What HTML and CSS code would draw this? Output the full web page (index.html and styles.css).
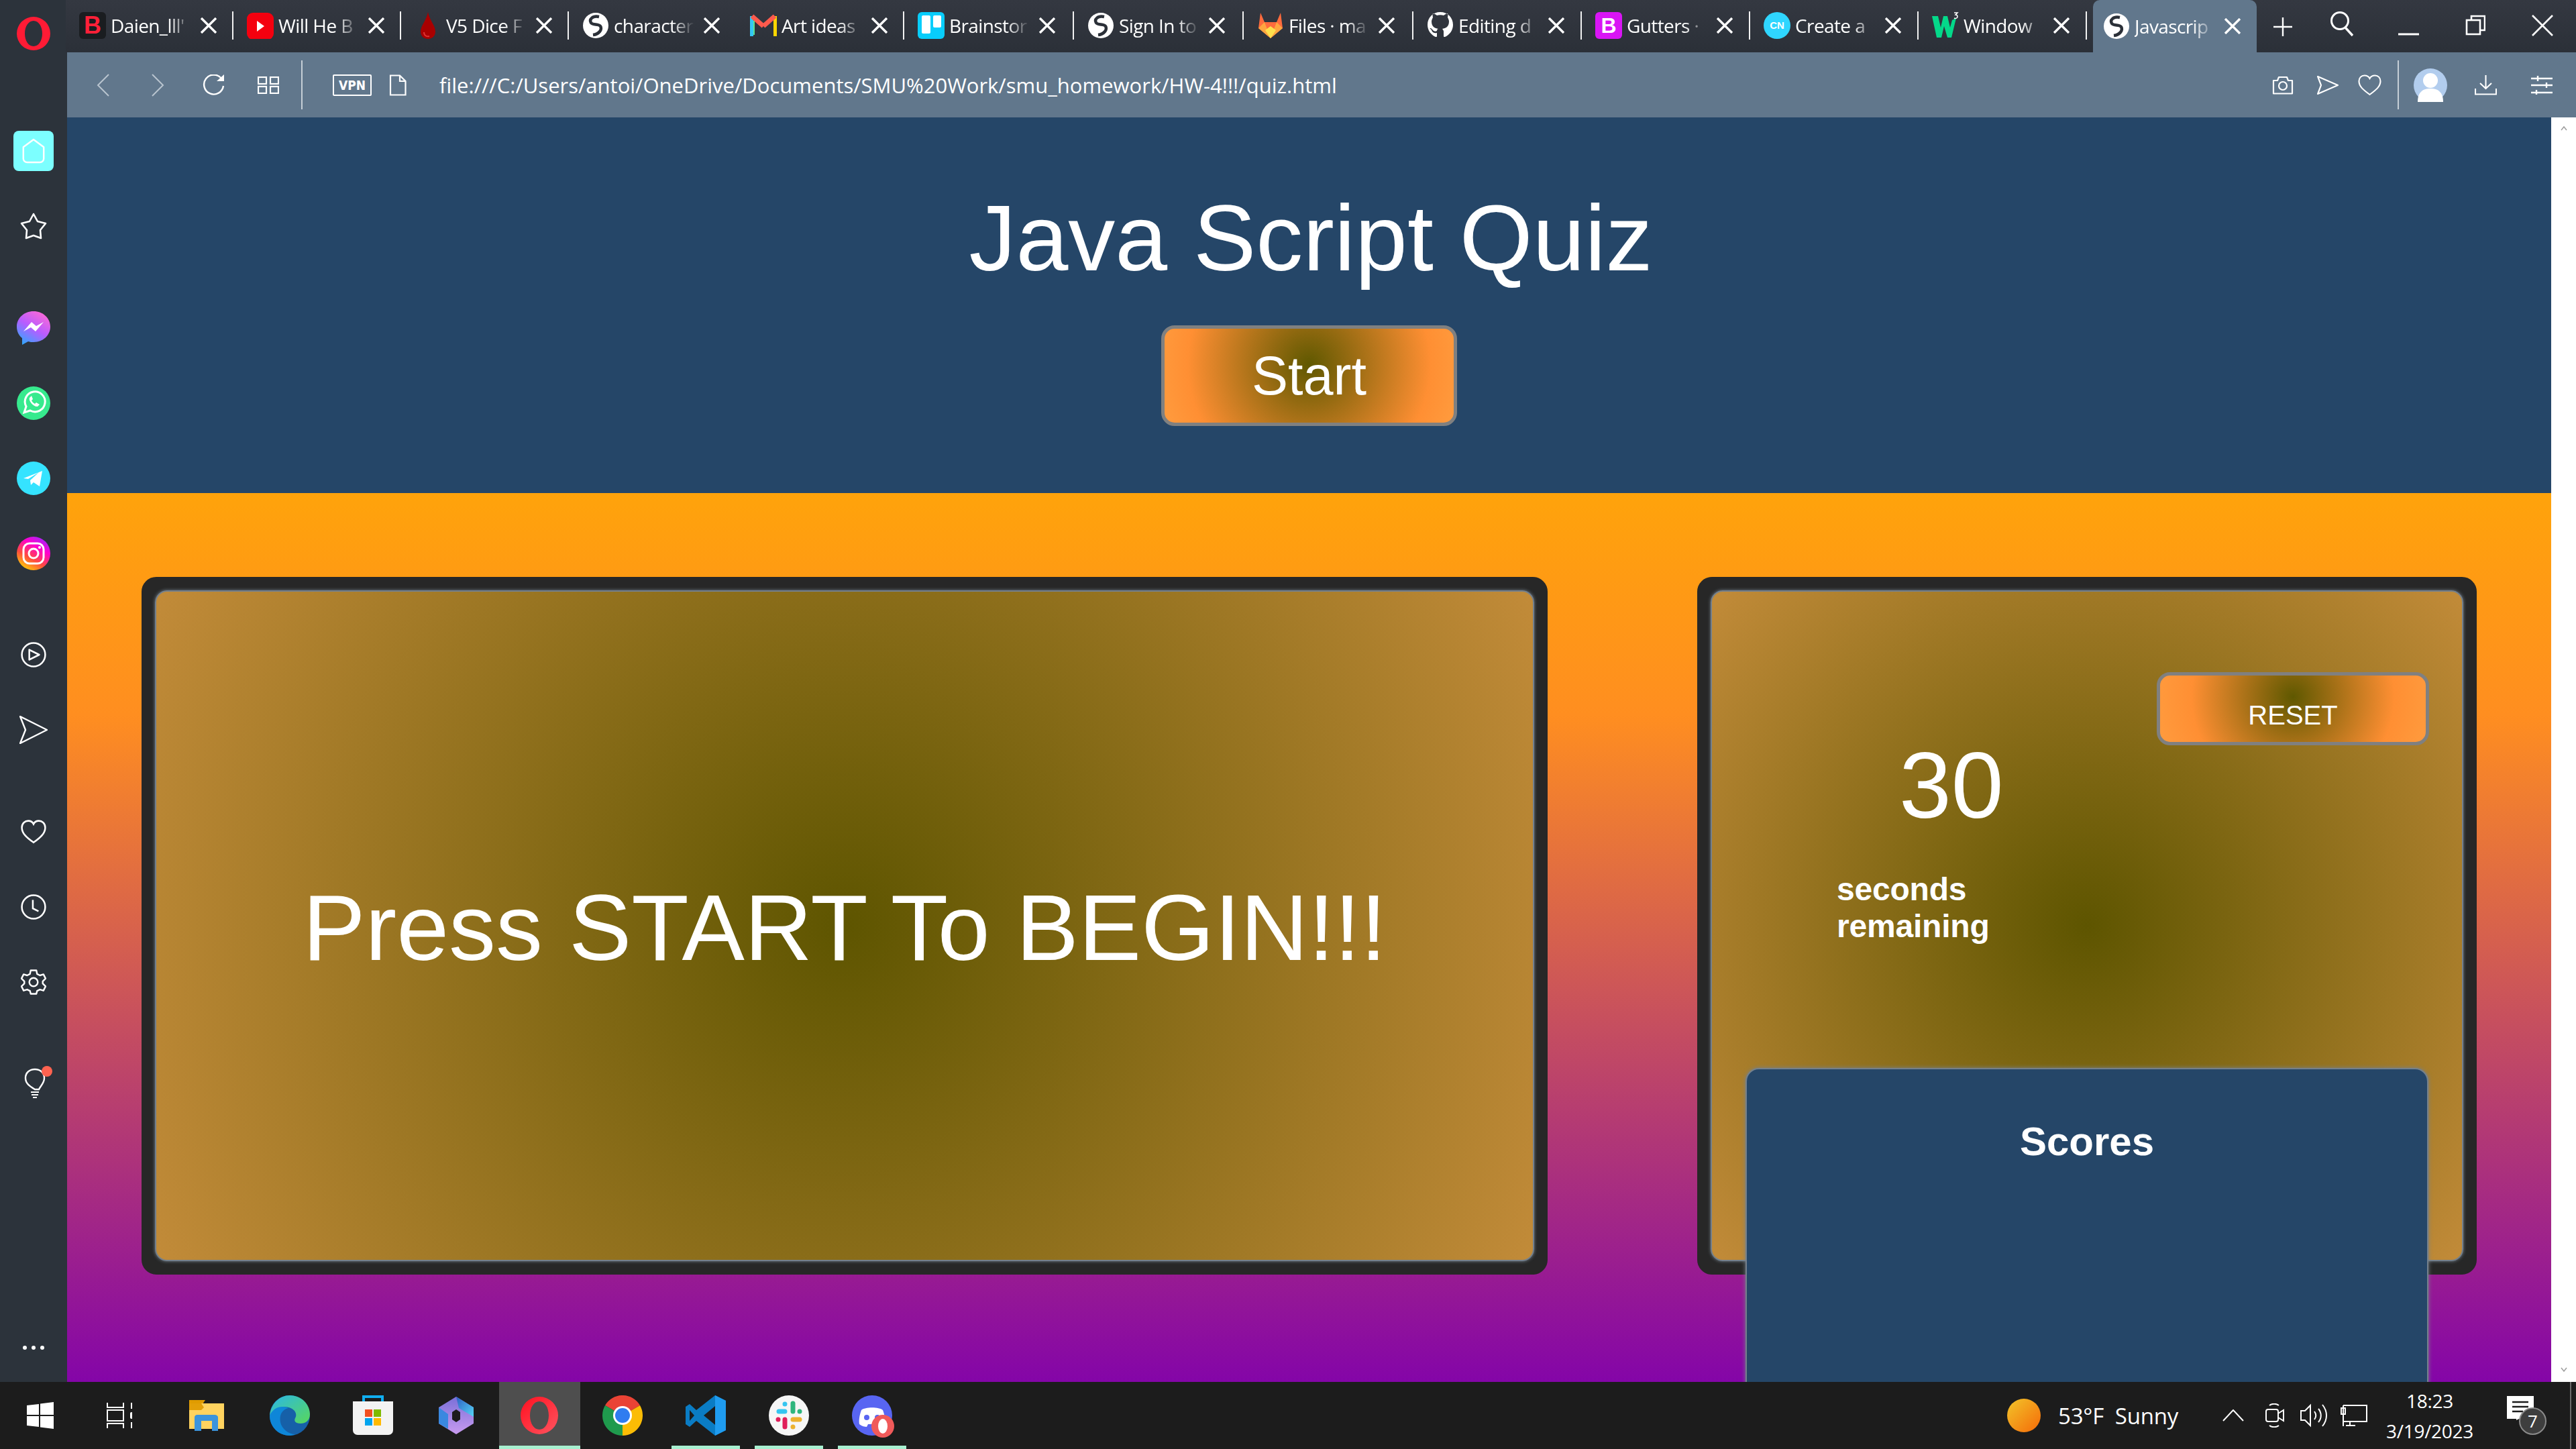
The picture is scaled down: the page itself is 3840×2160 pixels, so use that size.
FILE: index.html
```html
<!DOCTYPE html>
<html lang="en">
<head>
<meta charset="utf-8">
<title>Javascript Quiz</title>
<link rel="stylesheet" href="styles.css">
</head>
<body>
<svg class="sprite" aria-hidden="true">
  <symbol id="x" viewBox="0 0 26 24"><path d="M2 1 L24 23 M24 1 L2 23" fill="none" stroke="#fff" stroke-width="3.4"/></symbol>
  <symbol id="globe" viewBox="0 0 40 40"><circle cx="20" cy="20" r="19" fill="#fff"/><path d="M25 7 C15 5 10 11 13 16 C16 20 24 17 27 21 C30 26 25 33 16 34" fill="none" stroke="#2b3038" stroke-width="4.5"/></symbol>
</svg>
<div class="screen">
  <div class="browser">
    <header class="tabbar">
      <div class="logo-col">
        <svg class="opera" viewBox="0 0 50 50"><path fill-rule="evenodd" fill="#ff1b35" d="M25 0a25 25 0 1 0 0 50a25 25 0 1 0 0-50zM25 6c8 0 13 9 13 19s-5 19-13 19s-13-9-13-19s5-19 13-19z"/></svg>
      </div>
      <div class="tab sep"><span class="fav fav-band">B</span><span class="tab-text">Daien_lll'</span><svg class="tab-x"><use href="#x"/></svg></div>
      <div class="tab sep"><svg class="fav" viewBox="0 0 40 40"><rect width="40" height="40" y="1" rx="9" fill="#f4000f"/><path d="M15 13l11 8l-11 8z" fill="#fff"/></svg><span class="tab-text">Will He B</span><svg class="tab-x"><use href="#x"/></svg></div>
      <div class="tab sep"><svg class="fav" viewBox="0 0 40 40"><path d="M20 0 C22 12 31 20 31 29 C31 36 26 40 20 40 C14 40 9 36 9 29 C9 20 18 12 20 0z" fill="#a80000"/><path d="M14 30 C14 35 18 37 22 36" stroke="#d33" stroke-width="2" fill="none"/></svg><span class="tab-text">V5 Dice F</span><svg class="tab-x"><use href="#x"/></svg></div>
      <div class="tab"><svg class="fav"><use href="#globe"/></svg><span class="tab-text">character</span><svg class="tab-x"><use href="#x"/></svg></div>
      <div class="tab sep"><svg class="fav" viewBox="0 0 40 40"><path d="M2 6V36" stroke="#34c6f4" stroke-width="6"/><path d="M38 6V36" stroke="#ffd600" stroke-width="6"/><path d="M3 6L20 21" stroke="#ff5a4d" stroke-width="7"/><path d="M37 6L20 21" stroke="#ff5a4d" stroke-width="7"/><path d="M6 13V34" stroke="#5ce08f" stroke-width="2"/></svg><span class="tab-text">Art ideas</span><svg class="tab-x"><use href="#x"/></svg></div>
      <div class="tab sep"><svg class="fav" viewBox="0 0 40 40"><rect width="40" height="40" rx="6" fill="#08cdfb"/><rect x="6" y="5" width="13" height="27" rx="2" fill="#fff"/><rect x="23" y="5" width="12" height="18" rx="2" fill="#fff"/></svg><span class="tab-text">Brainstor</span><svg class="tab-x"><use href="#x"/></svg></div>
      <div class="tab sep"><svg class="fav"><use href="#globe"/></svg><span class="tab-text">Sign In to</span><svg class="tab-x"><use href="#x"/></svg></div>
      <div class="tab sep"><svg class="fav" viewBox="0 0 40 40"><path d="M2 24L5 1l6 14h18l6-14l3 23L20 39z" fill="#ff6b3d"/><path d="M2 24l9-9l9 24z" fill="#ffa640"/><path d="M38 24l-9-9l-9 24z" fill="#ffa640"/><path d="M12 27l8-6l8 6l-8 12z" fill="#ffe14d"/></svg><span class="tab-text">Files · ma</span><svg class="tab-x"><use href="#x"/></svg></div>
      <div class="tab sep"><svg class="fav" viewBox="0 0 40 40"><path fill="#fff" d="M20 0C9 0 1 8 1 19c0 8 5 15 12 18c1 0 2 0 2-1v-5c-6 1-7-2-8-4c0-1-2-2-2-2c-1-1 0-1 0-1c2 0 3 2 4 3c2 2 4 2 6 1c0-2 1-3 2-3c-5-1-10-3-10-11c0-2 1-4 2-6c0-1-1-3 0-6c0 0 2 0 6 3c3-1 7-1 10 0c4-3 6-3 6-3c1 3 0 5 0 6c1 2 2 4 2 6c0 8-5 10-10 11c1 1 2 3 2 4v7c0 1 1 1 2 1c7-3 12-10 12-18C39 8 31 0 20 0z"/></svg><span class="tab-text">Editing d</span><svg class="tab-x"><use href="#x"/></svg></div>
      <div class="tab sep"><span class="fav fav-boot">B</span><span class="tab-text">Gutters ·</span><svg class="tab-x"><use href="#x"/></svg></div>
      <div class="tab sep"><span class="fav fav-cn">CN</span><span class="tab-text">Create a</span><svg class="tab-x"><use href="#x"/></svg></div>
      <div class="tab sep"><svg class="fav" viewBox="0 0 40 40"><path d="M0 6h9l4 17l4-17h6l4 17l3-11l6-3l-7 29h-6l-5-17l-4 17H7z" fill="#04d98a"/><path d="M33 1h5l-3 3c2 0 3 1 3 3s-3 3-5 2" fill="none" stroke="#fff" stroke-width="1.5"/></svg><span class="tab-text">Window</span><svg class="tab-x"><use href="#x"/></svg></div>
      <div class="tab active"><svg class="fav"><use href="#globe"/></svg><span class="tab-text">Javascrip</span><svg class="tab-x"><use href="#x"/></svg></div>
      <svg class="win-plus" viewBox="0 0 32 78"><path d="M16 26V54M2 40H30" stroke="#fff" stroke-width="2.4" fill="none"/></svg>
      <svg class="win-search" viewBox="0 0 35 78"><circle cx="15" cy="31" r="12.5" fill="none" stroke="#fff" stroke-width="3"/><path d="M23 41L34 53" stroke="#fff" stroke-width="3.4"/></svg>
      <svg class="win-min" viewBox="0 0 31 78"><path d="M0 51H31" stroke="#fff" stroke-width="3"/></svg>
      <svg class="win-max" viewBox="0 0 30 78"><path d="M9 30V24H29V45H22" fill="none" stroke="#fff" stroke-width="2.6"/><rect x="2" y="30" width="20" height="21" fill="none" stroke="#fff" stroke-width="2.6"/></svg>
      <svg class="win-close" viewBox="0 0 32 78"><path d="M1 23L31 53M31 23L1 53" stroke="#fff" stroke-width="2.6"/></svg>
    </header>

    <div class="below">
      <nav class="sidebar">
        <div class="side-item"><span class="home-tile"><svg class="side-svg" viewBox="0 0 36 40"><path d="M18 2L34 14V32a6 6 0 0 1-6 6H8a6 6 0 0 1-6-6V14z" fill="none" stroke="#fff" stroke-width="2.6" stroke-linejoin="round"/></svg></span></div>
        <div class="side-item"><svg class="side-wide" viewBox="0 0 42 40"><path d="M21 2l6 11l12 3l-8 10l1 12l-11-4l-11 4l1-12L3 16l12-3z" fill="none" stroke="#fff" stroke-width="2.6" stroke-linejoin="round"/></svg></div>
        <div class="side-item group"><svg class="app-icon" viewBox="0 0 50 50"><defs><linearGradient id="msg" x1="0.2" y1="1" x2="0.8" y2="0"><stop offset="0" stop-color="#2fa8ff"/><stop offset=".5" stop-color="#b85cff"/><stop offset="1" stop-color="#ff6ad5"/></linearGradient></defs><path d="M25 0C11 0 0 10 0 23c0 7 3 13 8 17v10l9-5c3 1 5 1 8 1c14 0 25-10 25-23S39 0 25 0z" fill="url(#msg)"/><path d="M10 30L22 16l7 6l11-6L28 30l-7-6z" fill="#fff"/></svg></div>
        <div class="side-item"><svg class="app-icon" viewBox="0 0 50 50"><circle cx="25" cy="25" r="25" fill="#37ea8e"/><path d="M11 39l3-9a15 15 0 1 1 6 6z" fill="none" stroke="#fff" stroke-width="3"/><path d="M19 17c-2 4 6 14 12 13l3-3l-5-3l-2 2c-2-1-4-3-5-5l2-2l-2-5z" fill="#fff"/></svg></div>
        <div class="side-item"><svg class="app-icon" viewBox="0 0 50 50"><circle cx="25" cy="25" r="25" fill="#35e3ff"/><path d="M10 25L38 14l-4 23l-9-6l-4 4l-1-7l13-12l-16 10z" fill="#fff"/></svg></div>
        <div class="side-item"><svg class="app-icon" viewBox="0 0 50 50"><defs><linearGradient id="ig" x1="0.2" y1="1" x2="0.8" y2="0"><stop offset="0" stop-color="#ffdd00"/><stop offset=".35" stop-color="#ff4d3d"/><stop offset=".7" stop-color="#ff00d0"/><stop offset="1" stop-color="#9a2cff"/></linearGradient></defs><circle cx="25" cy="25" r="25" fill="url(#ig)"/><rect x="10" y="10" width="30" height="30" rx="9" fill="none" stroke="#fff" stroke-width="3"/><circle cx="25" cy="25" r="7" fill="none" stroke="#fff" stroke-width="3"/><circle cx="34" cy="16" r="2" fill="#fff"/></svg></div>
        <div class="side-item group-b"><svg class="side-svg" viewBox="0 0 36 36"><circle cx="18" cy="18" r="16.5" fill="none" stroke="#fff" stroke-width="2.4"/><path d="M12 11L26 18L12 25z" fill="none" stroke="#fff" stroke-width="2.4" stroke-linejoin="round"/></svg></div>
        <div class="side-item"><svg class="side-wide" viewBox="0 0 42 42"><path d="M1 1L41 21L1 41L9 21z" fill="none" stroke="#fff" stroke-width="2.4" stroke-linejoin="round"/></svg></div>
        <div class="side-item group"><svg class="side-svg" viewBox="0 0 36 34"><path d="M18 32C8 25 1.5 19 1.5 11C1.5 5 6 1.5 10.500 1.500C14 1.500 16.500 3 18 6C19.500 3 22 1.500 25.500 1.500C30 1.500 34.500 5 34.500 11C34.500 19 28 25 18 32z" fill="none" stroke="#fff" stroke-width="2.4"/></svg></div>
        <div class="side-item"><svg class="side-svg" viewBox="0 0 36 36"><circle cx="18" cy="18" r="16.500" fill="none" stroke="#fff" stroke-width="2.4"/><path d="M17 8V20L25 24" fill="none" stroke="#fff" stroke-width="2.4"/></svg></div>
        <div class="side-item"><svg class="side-svg" viewBox="0 0 36 36"><path d="M14 1.500H22L23 6.500L27 8.500L32 7L35 13L31 17V20L35 24L32 30L27 28.500L23 30.500L22 34.500H14L13 30.500L9 28.500L4 30L1 24L5 20V17L1 13L4 7L9 8.500L13 6.500z" fill="none" stroke="#fff" stroke-width="2.3" stroke-linejoin="round"/><circle cx="18" cy="18" r="6" fill="none" stroke="#fff" stroke-width="2.3"/></svg></div>
        <div class="side-item group-b"><svg class="bulb" viewBox="0 0 46 52"><path d="M18 33C10 28 4 24 4 16C4 8 10 3 18 3C26 3 32 8 32 16C32 24 26 28 24 33z" fill="none" stroke="#fff" stroke-width="2.4" transform="translate(1 2)"/><path d="M13 39H25M14 43H24M16 47H22" stroke="#fff" stroke-width="2"/><circle cx="37" cy="8" r="8" fill="#ff6350"/></svg></div>
        <div class="side-dots"><i></i><i></i><i></i></div>
      </nav>

      <div class="main">
        <div class="toolbar">
          <svg class="t-back" viewBox="0 0 19 34"><path d="M18 1L2 17L18 33" fill="none" stroke="#b9c4cf" stroke-width="2"/></svg>
          <svg class="t-fwd" viewBox="0 0 19 34"><path d="M1 1L17 17L1 33" fill="none" stroke="#b9c4cf" stroke-width="2"/></svg>
          <svg class="t-reload" viewBox="0 0 33 32"><path d="M28 6A14.500 14.500 0 1 0 31 17" fill="none" stroke="#fff" stroke-width="2.4"/><path d="M21 10H32V0z" fill="#fff"/></svg>
          <svg class="t-grid" viewBox="0 0 32 26"><g fill="none" stroke="#fff" stroke-width="2.2"><rect x="1" y="1" width="12" height="10"/><rect x="19" y="1" width="12" height="10"/><rect x="1" y="15" width="12" height="10"/><rect x="19" y="15" width="12" height="10"/></g></svg>
          <span class="t-sep"></span>
          <span class="vpn">VPN</span>
          <svg class="t-doc" viewBox="0 0 26 32"><path d="M2 1.500H16L24.500 10V30.500H2z M16 1.500V10H24.500" fill="none" stroke="#fff" stroke-width="2.2"/></svg>
          <span class="url">file:///C:/Users/antoi/OneDrive/Documents/SMU%20Work/smu_homework/HW-4!!!/quiz.html</span>
          <svg class="t-cam" viewBox="0 0 32 28"><path d="M2 7H8L10 2H22L24 7H30V26.500H2z" fill="none" stroke="#fff" stroke-width="2.2" stroke-linejoin="round"/><circle cx="16" cy="15" r="6" fill="none" stroke="#fff" stroke-width="2.2"/></svg>
          <svg class="t-send" viewBox="0 0 32 28"><path d="M1 1L31 14L1 27L6 14z" fill="none" stroke="#fff" stroke-width="2.1" stroke-linejoin="round"/></svg>
          <svg class="t-heart" viewBox="0 0 35 32"><path d="M17.500 30C8 23 1.500 18 1.500 10C1.500 5 5 1.500 9.500 1.500C13 1.500 16 3 17.500 6C19 3 22 1.500 25.500 1.500C30 1.500 33.500 5 33.500 10C33.500 18 27 23 17.500 30z" fill="none" stroke="#fff" stroke-width="2.1"/></svg>
          <span class="t-sep t-sep2"></span>
          <svg class="t-avatar" viewBox="0 0 50 50"><circle cx="25" cy="25" r="25" fill="#b2cdee"/><circle cx="25" cy="18" r="11" fill="#fff"/><path d="M6 50C6 35 14 30 25 30C36 30 44 35 44 50z" fill="#fff"/></svg>
          <svg class="t-dl" viewBox="0 0 33 30"><path d="M16.500 0V19M8 12L16.500 20L25 12M1 20V28.500H32V20" fill="none" stroke="#fff" stroke-width="2.1"/></svg>
          <svg class="t-set" viewBox="0 0 32 28"><path d="M0 4H32M0 14H32M0 25H32M10 0V8M23 10V18M8 21V28" stroke="#fff" stroke-width="2.4" fill="none"/></svg>
        </div>

        <div class="viewport">
          <div class="page">
            <section class="hero">
              <h1 class="title">Java Script Quiz</h1>
              <button class="btn btn-start">Start</button>
            </section>
            <section class="stage">
              <div class="frame frame-quiz">
                <div class="panel panel-quiz"><p class="prompt">Press START To BEGIN!!!</p></div>
              </div>
              <div class="frame frame-side">
                <div class="panel panel-side">
                  <div class="side-top">
                    <div class="timer">
                      <div class="count">30</div>
                      <div class="count-label">seconds<br>remaining</div>
                    </div>
                    <button class="btn btn-reset">RESET</button>
                  </div>
                  <div class="scores"><h2 class="scores-title">Scores</h2></div>
                </div>
              </div>
            </section>
          </div>
          <div class="scrollbar">
            <svg class="sb-arrow" viewBox="0 0 12 14"><path d="M2 9L6 4L10 9" fill="none" stroke="#a0a0a0" stroke-width="1.600"/></svg>
            <svg class="sb-arrow" viewBox="0 0 12 14"><path d="M2 5L6 10L10 5" fill="none" stroke="#a0a0a0" stroke-width="1.600"/></svg>
          </div>
        </div>
      </div>
    </div>
  </div>

  <footer class="taskbar">
    <div class="task task-start"><svg class="ti" width="40" height="40" viewBox="0 0 40 40"><path d="M0 5L18 3V19H0zM20 2.500L40 0V19H20zM0 21H18V37L0 35zM20 21H40V40L20 37.500z" fill="#fff"/></svg></div>
    <div class="task task-view"><svg class="ti" width="38" height="38" viewBox="0 0 38 38"><g fill="none" stroke="#fff" stroke-width="2"><path d="M1 0V7H25V0"/><rect x="1" y="11" width="24" height="16"/><path d="M1 38V31H25V38"/><path d="M37 0V9M37 29V38"/></g><rect x="35" y="14" width="4" height="10" rx="2" fill="#fff"/></svg></div>
    <div class="task"><svg class="ti" width="52" height="46" viewBox="0 0 52 46"><path d="M0 6H20L24 0H0z" fill="#e09c00"/><path d="M0 5H52V43H0z" fill="#ffd35f"/><path d="M0 5H18L22 11L18 15H0z" fill="#e3a008"/><path d="M8 46V26C8 23 10 22 12 22H38C40 22 43 23 43 26V46H34V31H18V46z" fill="#3b94dc"/></svg></div>
    <div class="task"><svg class="ti" width="60" height="60" viewBox="0 0 60 60"><defs><linearGradient id="edge" x1="0" y1="0" x2="1" y2="1"><stop offset="0" stop-color="#2bb6e8"/><stop offset="1" stop-color="#58d85a"/></linearGradient></defs><circle cx="30" cy="30" r="30" fill="#1660a8"/><path d="M0 30C2 12 15 0 30 0C48 0 60 14 60 28C60 38 53 42 46 42C38 42 36 38 38 34C40 31 40 26 36 22C28 14 8 16 0 30z" fill="url(#edge)"/><path d="M0 30C5 18 18 14 28 19C18 21 14 30 16 40C18 50 28 58 38 58C33 60 30 60 30 60C12 60 0 46 0 30z" fill="#0e86d8"/></svg></div>
    <div class="task"><svg class="ti" width="60" height="60" viewBox="0 0 60 60"><path d="M16 14V2H44V14" fill="none" stroke="#10aef0" stroke-width="4"/><path d="M0 9H60V52a7 7 0 0 1-7 7H7a7 7 0 0 1-7-7z" fill="#f3f3f3"/><rect x="18" y="21" width="11" height="11" fill="#f25022"/><rect x="31" y="21" width="11" height="11" fill="#7fba00"/><rect x="18" y="34" width="11" height="11" fill="#00a4ef"/><rect x="31" y="34" width="11" height="11" fill="#ffb900"/></svg></div>
    <div class="task"><svg class="ti" width="52" height="56" viewBox="0 0 52 56"><defs><linearGradient id="m3a" x1="0" y1="1" x2="0" y2="0"><stop offset="0" stop-color="#c89bf0"/><stop offset="1" stop-color="#7a6fd8"/></linearGradient><linearGradient id="m3b" x1="0" y1="0" x2="1" y2="1"><stop offset="0" stop-color="#2d5fc4"/><stop offset="1" stop-color="#55d4f5"/></linearGradient></defs><path d="M26 0L52 16V40L26 56L0 40V16z" fill="url(#m3a)"/><path d="M26 0L52 16V30L30 17z" fill="url(#m3b)"/><path d="M0 16V40L14 48V26z" fill="#3a88e0"/><path d="M26 19L32 23V34L26 38L20 34V23z" fill="#1c1c1c"/></svg></div>
    <div class="task task-on task-active"><svg class="ti" width="56" height="56" viewBox="0 0 56 56"><defs><linearGradient id="op" x1="0" y1="0" x2="1" y2="1"><stop offset="0" stop-color="#ff1020"/><stop offset="1" stop-color="#ff5560"/></linearGradient></defs><path fill-rule="evenodd" fill="url(#op)" d="M28 0a28 28 0 1 0 0 56a28 28 0 1 0 0-56zM28 7c8 0 14 9 14 21s-6 21-14 21s-14-9-14-21s6-21 14-21z"/></svg></div>
    <div class="task"><svg class="ti" width="60" height="60" viewBox="0 0 60 60"><path d="M30 30L4 15A30 30 0 0 1 56 15z" fill="#ea4335"/><path d="M30 30L56 15A30 30 0 0 1 30 60z" fill="#fbbc05"/><path d="M30 30L30 60A30 30 0 0 1 4 15z" fill="#1f9a4d"/><circle cx="30" cy="30" r="14" fill="#fff"/><circle cx="30" cy="30" r="11" fill="#2f7cf0"/></svg></div>
    <div class="task task-on"><svg class="ti" width="60" height="60" viewBox="0 0 60 60"><path d="M44 0L60 8V52L44 60L16 38L6 47L0 43V17L6 13L16 22z" fill="#0a7cc4"/><path d="M44 0L60 8V52L44 60z" fill="#1f9cf0"/><path d="M44 16L27 30L44 44z" fill="#1c1c1c"/><path d="M6 22L13 30L6 38z" fill="#1c1c1c"/></svg></div>
    <div class="task task-on"><svg class="ti" width="60" height="60" viewBox="0 0 60 60"><circle cx="30" cy="30" r="30" fill="#f6f6f6"/><g stroke-linecap="round" stroke-width="7" fill="none"><path d="M15 24H24M24 13V13" stroke="#36c5f0"/><path d="M36 12V24M46 24V24" stroke="#2eb67d"/><path d="M36 36H46M36 47V47" stroke="#ecb22e"/><path d="M24 36V47M14 36V36" stroke="#e01e5a"/></g></svg></div>
    <div class="task task-on"><svg class="ti ti-discord" width="66" height="64" viewBox="0 0 66 64"><circle cx="30" cy="30" r="30" fill="#5865f2"/><path d="M14 22C20 17 40 17 46 22C49 30 50 38 49 43C45 46 41 47 38 47L36 43H24L22 47C19 47 15 46 11 43C10 38 11 30 14 22z" fill="#fff"/><circle cx="22" cy="33" r="4" fill="#5865f2"/><circle cx="38" cy="33" r="4" fill="#5865f2"/><circle cx="46" cy="46" r="17" fill="#f05a5a"/><ellipse cx="46" cy="46" rx="7" ry="11" fill="#fff"/></svg></div>

    <div class="tray">
      <svg class="sun" viewBox="0 0 50 50"><defs><linearGradient id="sun" x1="0" y1="0" x2="1" y2="1"><stop offset="0" stop-color="#f2c52a"/><stop offset="1" stop-color="#f56a08"/></linearGradient></defs><circle cx="25" cy="25" r="25" fill="url(#sun)"/></svg>
      <span class="weather">53°F&nbsp; Sunny</span>
      <svg class="tr-chev" viewBox="0 0 32 18"><path d="M1 17L16 1L31 17" fill="none" stroke="#fff" stroke-width="2"/></svg>
      <svg class="tr-video" viewBox="0 0 28 36"><path d="M6 3C10 0 16 0 20 3M6 33C10 36 16 36 20 33" fill="none" stroke="#fff" stroke-width="2"/><rect x="1" y="9" width="18" height="18" rx="3" fill="none" stroke="#fff" stroke-width="2"/><path d="M19 15L27 10V26L19 21" fill="none" stroke="#fff" stroke-width="2"/></svg>
      <svg class="tr-speaker" viewBox="0 0 41 36"><path d="M1 11H7L15 3V33L7 25H1z" fill="none" stroke="#fff" stroke-width="2"/><path d="M21 12C24 16 24 20 21 24M27 8C32 14 32 22 27 28M33 2C41 12 41 24 33 34" fill="none" stroke="#fff" stroke-width="2"/></svg>
      <svg class="tr-net" viewBox="0 0 40 32"><path d="M4 1H39V25H4V1M4 1V32M14 25V31M8 31H22" fill="none" stroke="#fff" stroke-width="2"/><rect x="1" y="5" width="6" height="9" fill="none" stroke="#fff" stroke-width="2"/></svg>
      <div class="clock"><span>18:23</span><span>3/19/2023</span></div>
      <div class="notif">
        <svg class="notif-icon" viewBox="0 0 40 36"><path d="M0 0H40V34H18L14 36V34H0z" fill="#fff"/><path d="M8 9H32M8 16H32M8 23H24" stroke="#1c1c1c" stroke-width="2.500"/></svg>
        <span class="notif-badge">7</span>
      </div>
      <span class="desk-line"></span>
    </div>
  </footer>
</div>
</body>
</html>
```

FILE: styles.css
```css
* { box-sizing: border-box; }
html, body { margin: 0; padding: 0; }
body { width: 3840px; height: 2160px; overflow: hidden; background: #1c1c1c; font-family: "Liberation Sans", Arial, sans-serif; }
.sprite { display: block; width: 0; height: 0; }
.screen { width: 3840px; height: 2160px; display: flex; flex-direction: column; }
.browser { height: 2060px; display: flex; flex-direction: column; flex: none; }

/* tab strip */
.tabbar { height: 78px; flex: none; display: flex; align-items: center; background: linear-gradient(#343841, #2b3038); color: #fff; font-family: "Open Sans", sans-serif; }
.logo-col { width: 98px; height: 78px; flex: none; display: flex; padding: 25px 0 0 25px; background: #2c333b; }
.opera { width: 50px; height: 50px; display: block; }
.tab { width: 251px; height: 42px; flex: none; display: flex; align-items: center; padding-left: 20px; border-right: 2px solid transparent; margin-top: -3px; }
.tab:nth-child(-n+6) { width: 250px; }
.tab:nth-child(n+7):nth-child(-n+9) { width: 253px; }
.tab.sep { border-right-color: #f2f2f2; }
.tab.active { margin: 0 0 0 9px; width: 244px; height: 78px; padding-left: 15px; padding-top: 0; border: 0; background: #61778c; border-radius: 10px 10px 0 0; }
.fav { width: 40px; height: 40px; flex: none; display: block; }
.fav-band { background: #1a1d20; color: #ff2038; border-radius: 6px; font: 700 36px/40px "Liberation Sans", sans-serif; text-align: center; }
.fav-boot { background: #d915f5; color: #fff; border-radius: 6px; font: 700 32px/40px "Liberation Sans", sans-serif; text-align: center; }
.fav-cn { background: #2fd6ff; color: #fff; border-radius: 50%; font: 700 15px/40px "Liberation Sans", sans-serif; text-align: center; }
.tab-text { width: 120px; margin-left: 7px; flex: none; font-size: 28px; line-height: 40px; white-space: nowrap; overflow: hidden; -webkit-mask-image: linear-gradient(90deg, #000 72%, transparent 100%); mask-image: linear-gradient(90deg, #000 72%, transparent 100%); letter-spacing: -0.6px; }
.tab-x { width: 26px; height: 24px; margin-left: 13px; flex: none; }
.win-plus, .win-search, .win-min, .win-max, .win-close { height: 78px; flex: none; display: block; }
.win-plus { width: 32px; margin-left: 23px; }
.win-search { width: 35px; margin-left: 54px; }
.win-min { width: 31px; margin-left: 67px; }
.win-max { width: 30px; margin-left: 69px; }
.win-close { width: 32px; margin-left: 69px; }

/* layout under the strip */
.below { flex: 1; min-height: 0; display: flex; }
.sidebar { width: 100px; flex: none; background: #2c333b; padding-top: 91px; display: flex; flex-direction: column; align-items: center; }
.side-item { height: 112px; width: 100px; flex: none; display: flex; align-items: center; justify-content: center; }
.side-item.group { margin-top: 40px; }
.side-item.group-b { margin-top: 39px; }
.home-tile { width: 60px; height: 60px; border-radius: 8px; background: #7cffff; display: flex; align-items: center; justify-content: center; }
.side-svg { width: 38px; height: 38px; display: block; }
.side-wide { width: 42px; height: 42px; display: block; }
.app-icon { width: 50px; height: 50px; display: block; }
.bulb { width: 46px; height: 52px; display: block; margin-left: 12px; }
.side-dots { margin-top: auto; margin-bottom: 48px; display: flex; gap: 7px; }
.side-dots i { width: 6px; height: 6px; border-radius: 50%; background: #fff; display: block; }

.main { flex: 1; min-width: 0; display: flex; flex-direction: column; }
.toolbar { height: 97px; flex: none; display: flex; align-items: center; padding: 0 35px 0 44px; background: #61778c; color: #fff; }
.toolbar svg { display: block; flex: none; }
.t-back { width: 19px; height: 34px; }
.t-fwd { width: 19px; height: 34px; margin-left: 63px; }
.t-reload { width: 33px; height: 32px; margin-left: 57px; }
.t-grid { width: 32px; height: 26px; margin-left: 49px; }
.t-sep { width: 2px; height: 73px; background: #c6cfd7; margin-left: 33px; flex: none; }
.t-sep2 { margin-left: 24px; }
.vpn { width: 58px; height: 32px; margin-left: 45px; border: 2px solid #fff; border-radius: 2px; font: 700 19px/28px "DejaVu Sans Condensed", "DejaVu Sans", sans-serif; text-align: center; flex: none; }
.t-doc { width: 26px; height: 32px; margin-left: 26px; }
.url { margin-left: 49px; font: 400 31px/40px "Open Sans", sans-serif; white-space: nowrap; }
.t-cam { width: 32px; height: 28px; margin-left: auto; }
.t-send { width: 32px; height: 28px; margin-left: 35px; }
.t-heart { width: 35px; height: 32px; margin-left: 29px; }
.t-avatar { width: 50px; height: 50px; margin-left: 22px; }
.t-dl { width: 33px; height: 30px; margin-left: 41px; }
.t-set { width: 32px; height: 28px; margin-left: 51px; }

/* the page itself */
.viewport { flex: 1; min-height: 0; display: flex; }
.page { flex: 1; min-width: 0; overflow: hidden; display: flex; flex-direction: column; }
.scrollbar { width: 37px; flex: none; background: #fff; display: flex; flex-direction: column; justify-content: space-between; align-items: center; padding: 10px 0 12px; }
.sb-arrow { width: 12px; height: 14px; display: block; }

.hero { height: 560px; flex: none; background: #254668; padding-top: 100px; display: flex; flex-direction: column; align-items: center; color: #fff; }
.title { margin: 0 0 50px 5px; font-weight: 400; font-size: 140px; line-height: 160px; }
.btn { display: block; padding: 0; color: #fff; font-family: "Liberation Sans", Arial, sans-serif; border: 5px solid #808080; border-radius: 20px; }
.btn-start { width: 441px; height: 150px; font-size: 81px; background: radial-gradient(circle 226px at 50% 38%, #5f5800 0%, #ff8f33 80%, #ff9a3d 100%); }
.btn-reset { width: 406px; height: 109px; margin: 120px 0 0 0; font-size: 40px; padding-top: 20px; flex: none; background: radial-gradient(circle 204px at 50% 32%, #5f5800 0%, #ff8f33 74%, #ff9a3d 100%); }

.stage { flex: 1; min-height: 0; display: flex; justify-content: space-between; align-items: flex-start; padding: 125px 111px 0; background: linear-gradient(#ffa30b 0%, #ff8e20 25%, #8405a8 100%); overflow: hidden; }
.frame { height: 1040px; flex: none; border: 20px solid #272727; border-radius: 22px; background: #272727; }
.frame-quiz { width: 2096px; }
.frame-side { width: 1162px; }
.panel { height: 100%; border: 2px solid #74808c; border-radius: 18px; background: radial-gradient(circle farthest-corner, #5e5500, #c28b39); box-shadow: 0 0 5px #74808c; color: #fff; }
.panel-quiz { display: flex; align-items: center; justify-content: center; }
.prompt { margin: 5px 0 0; font-size: 140px; line-height: 160px; }
.panel-side { display: flex; flex-direction: column; overflow: visible; }
.side-top { display: flex; flex: none; justify-content: space-between; padding-right: 49px; }
.timer { padding: 219px 0 0 186px; }
.count { font-size: 140px; line-height: 140px; margin-left: 93px; }
.count-label { margin-top: 57px; font-size: 48px; line-height: 55px; font-weight: 700; letter-spacing: -0.2px; }
.scores { flex: none; height: 700px; margin: 184px 50px 0 50px; background: #254668; border: 2px solid #74808c; border-radius: 20px; box-shadow: 0 0 6px #74808c; padding-top: 73px; text-align: center; }
.scores-title { margin: 0; font-size: 60px; line-height: 70px; font-weight: 700; }

/* taskbar */
.taskbar { height: 100px; flex: none; display: flex; background: #1c1c1c; color: #fff; font-family: "Open Sans", sans-serif; }
.task { width: 124px; flex: none; height: 100px; display: flex; align-items: center; justify-content: center; }
.ti { display: block; flex: none; }
.ti-discord { margin: 4px 0 0 6px; }
.task-start { width: 120px; }
.task-view { width: 116px; margin-right: 10px; }
.task-on { background: linear-gradient(#a8f0d0, #a8f0d0) no-repeat center bottom / 102px 5px; }
.task-active { background: linear-gradient(#a8f0d0, #a8f0d0) no-repeat center bottom / 121px 5px, linear-gradient(#4e4e4e, #4e4e4e) no-repeat center / 121px 100%; }
.tray { margin-left: auto; display: flex; align-items: center; padding-right: 7px; }
.tray svg { display: block; flex: none; }
.sun { width: 50px; height: 50px; }
.weather { width: 245px; margin-left: 26px; flex: none; font-size: 33px; letter-spacing: -0.2px; white-space: nowrap; }
.tr-chev { width: 32px; height: 18px; }
.tr-video { width: 28px; height: 36px; margin-left: 32px; }
.tr-speaker { width: 41px; height: 36px; margin-left: 24px; }
.tr-net { width: 40px; height: 32px; margin-left: 19px; }
.clock { width: 160px; margin-left: 13px; flex: none; display: flex; flex-direction: column; align-items: center; gap: 9px; font-size: 28px; line-height: 36px; letter-spacing: -0.3px; }
.notif { width: 60px; height: 60px; margin-left: 35px; flex: none; display: flex; align-items: flex-start; padding-top: 1px; position: relative; }
.notif-icon { width: 40px; height: 36px; }
.notif-badge { position: absolute; left: 18px; top: 18px; width: 41px; height: 41px; border-radius: 50%; background: #3e3e3e; border: 2px solid #8a8a8a; font-size: 26px; line-height: 36px; text-align: center; }
.desk-line { width: 2px; height: 100px; margin-left: 34px; background: #6a6a6a; flex: none; }
```
